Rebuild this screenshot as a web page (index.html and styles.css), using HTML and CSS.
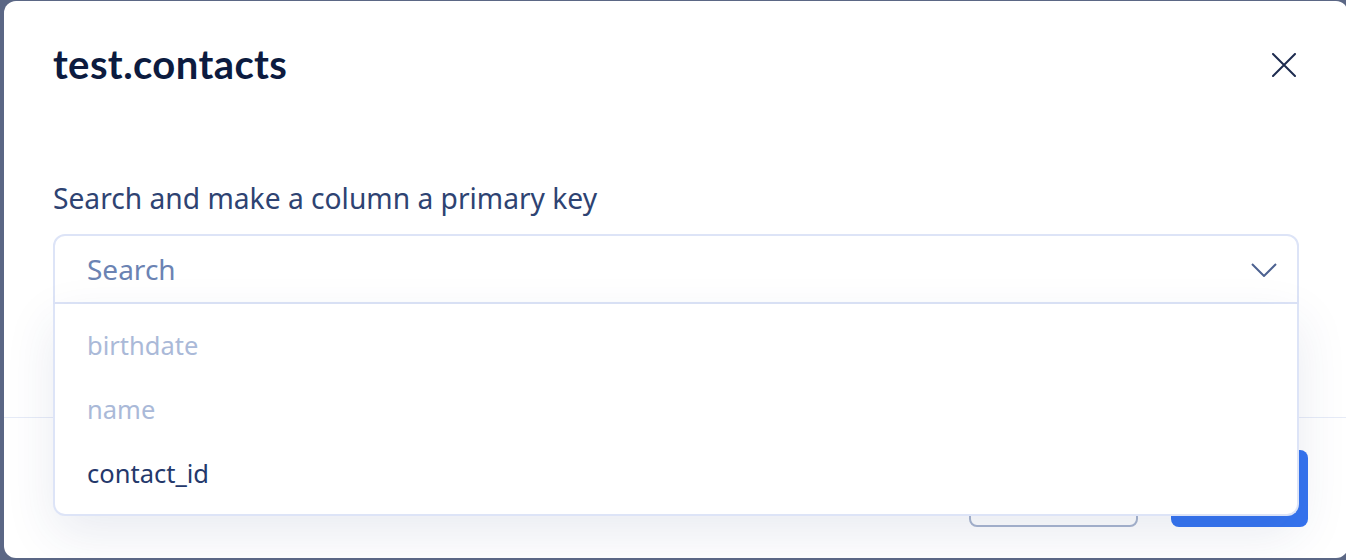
FILE: index.html
```html
<!DOCTYPE html>
<html lang="en">
<head>
<meta charset="utf-8">
<title>test.contacts</title>
<link rel="stylesheet" href="styles.css">
</head>
<body>
<div class="modal">
  <div class="modal-header">
    <h1 class="title">test.contacts</h1>
    <button class="close" aria-label="Close">
      <svg width="24" height="24" viewBox="0 0 24 24"><path d="M1 1L23 23M23 1L1 23" stroke="#1d2b4f" stroke-width="2" stroke-linecap="round"/></svg>
    </button>
  </div>
  <div class="modal-body">
    <label class="label">Search and make a column a primary key</label>
    <div class="combo">
      <div class="select">
        <span class="placeholder">Search</span>
        <svg class="chevron" width="26" height="14" viewBox="0 0 26 14"><path d="M1 1L13 13L25 1" fill="none" stroke="#4d6291" stroke-width="2"/></svg>
      </div>
      <ul class="list">
        <li class="item disabled">birthdate</li>
        <li class="item disabled">name</li>
        <li class="item">contact_id</li>
      </ul>
    </div>
  </div>
  <div class="modal-footer">
    <button class="btn btn-outline">Cancel</button>
    <button class="btn btn-primary">Save</button>
  </div>
</div>
</body>
</html>
```
FILE: styles.css
```css
html, body {
  margin: 0;
  padding: 0;
}
body {
  background: #5b6785;
  overflow: hidden;
  width: 1346px;
  height: 560px;
  font-family: "Noto Sans", "Open Sans", sans-serif;
}
.modal {
  margin: 1px 0 0 4px;
  width: 1344px;
  height: 557px;
  background: #ffffff;
  border-radius: 12px;
  display: flex;
  flex-direction: column;
  overflow: hidden;
}
.modal-header {
  display: flex;
  justify-content: space-between;
  align-items: flex-start;
  padding: 43px 44px 0 49px;
}
.title {
  margin: 0;
  font-family: "Lato", sans-serif;
  font-weight: 700;
  font-size: 40px;
  line-height: 40px;
  color: #0c1b3f;
  letter-spacing: 0.4px;
}
.close {
  border: none;
  background: none;
  padding: 0;
  width: 40px;
  height: 40px;
  display: flex;
  align-items: center;
  justify-content: center;
  margin-top: 1px;
}
.modal-body {
  padding: 95px 49px 0 49px;
  display: flex;
  flex-direction: column;
}
.label {
  font-size: 28.2px;
  line-height: 36px;
  color: #2e4372;
}
.combo {
  position: relative;
  margin-top: 18px;
}
.select {
  height: 66px;
  border: 2px solid #dde4f7;
  border-radius: 12px 12px 0 0;
  display: flex;
  align-items: center;
  justify-content: space-between;
  padding: 0 20px 0 32px;
}
.placeholder {
  font-size: 28px;
  color: #6b83b3;
}
.chevron {
  display: block;
  margin-top: 2px;
}
.list {
  position: absolute;
  left: 0;
  right: 0;
  top: 100%;
  margin: 0;
  padding: 9px 0;
  list-style: none;
  background: #ffffff;
  border: 2px solid #dde4f7;
  border-top: none;
  border-radius: 0 0 12px 12px;
  box-shadow: 0 18px 50px rgba(40, 60, 120, 0.10);
  z-index: 2;
}
.item {
  height: 64px;
  line-height: 64px;
  padding-left: 32px;
  font-size: 25.5px;
  color: #24386b;
}
.item.disabled {
  color: #aab9d8;
}
.modal-footer {
  margin-top: 113px;
  border-top: 1px solid #e6ebf7;
  display: flex;
  justify-content: flex-end;
  gap: 33px;
  padding: 32px 40px 0 0;
}
.btn {
  height: 77px;
  border-radius: 8px;
  font-family: "Noto Sans", sans-serif;
  font-size: 24px;
  font-weight: 600;
}
.btn-outline {
  width: 169px;
  background: #ffffff;
  border: 2px solid #a9b6cf;
  color: #2e4372;
}
.btn-primary {
  width: 137px;
  background: #3574f0;
  border: none;
  color: #ffffff;
}
```
